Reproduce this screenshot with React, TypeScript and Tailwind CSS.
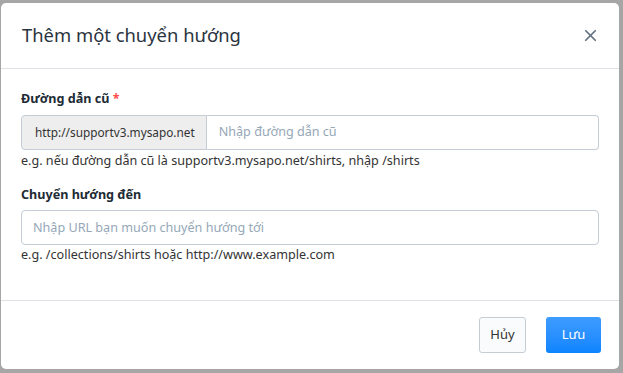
import { X } from "lucide-react";

export default function App() {
  return (
    <div
      className="h-[373px] w-[623px] bg-[#a6a6a6] pl-px pr-[4px] pt-[3px] pb-[4px]"
      style={{ fontFamily: '"Noto Sans", "Open Sans", sans-serif' }}
    >
      <div className="flex h-full w-full flex-col rounded-[5px] bg-white text-[#212b35]">
        <div className="flex h-[66px] items-center justify-between border-b border-[#dfe3e8] pl-[21px] pr-[19px]">
          <h4 className="text-[18.4px] leading-none text-[#2b3440]">Thêm một chuyển hướng</h4>
          <button className="text-[#637381]">
            <X size={19} strokeWidth={2.2} />
          </button>
        </div>

        <div className="flex-1 px-[20px] pt-[21px] text-[12.6px]">
          <label className="block font-bold leading-[18px]">
            Đường dẫn cũ <span className="text-[#ff4d4d]">*</span>
          </label>
          <div className="mt-[7px] flex h-[35px] w-full">
            <span className="flex items-center rounded-l-[4px] border border-[#c4cdd5] bg-[#eeeeee] pl-[13px] pr-[11px] text-[11.8px] text-[#333]">
              http://supportv3.mysapo.net
            </span>
            <input
              className="flex-1 rounded-r-[4px] border border-l-0 border-[#c4cdd5] px-[12px] text-[12.6px] outline-none placeholder:text-[#95a7b7]"
              placeholder="Nhập đường dẫn cũ"
            />
          </div>
          <p className="mt-[2px] leading-[18px] text-[#333]">
            e.g. nếu đường dẫn cũ là supportv3.mysapo.net/shirts, nhập /shirts
          </p>

          <label className="mt-[16px] block font-bold leading-[18px]">Chuyển hướng đến</label>
          <input
            className="mt-[6px] h-[35px] w-full rounded-[4px] border border-[#c4cdd5] px-[11px] text-[12.6px] outline-none placeholder:text-[#95a7b7]"
            placeholder="Nhập URL bạn muốn chuyển hướng tới"
          />
          <p className="mt-[1px] leading-[18px] text-[#333]">
            e.g. /collections/shirts hoặc http://www.example.com
          </p>
        </div>

        <div className="flex h-[69px] items-center justify-end gap-[20px] border-t border-[#dfe3e8] pr-[18px]">
          <button className="h-[36px] w-[47px] rounded-[3px] border border-[#c4cdd5] bg-[#fafbfc] text-[13px] text-[#333]">
            Hủy
          </button>
          <button className="h-[36px] w-[55px] rounded-[3px] bg-gradient-to-b from-[#3e9cff] to-[#0a84ff] text-[13px] text-white">
            Lưu
          </button>
        </div>
      </div>
    </div>
  );
}
